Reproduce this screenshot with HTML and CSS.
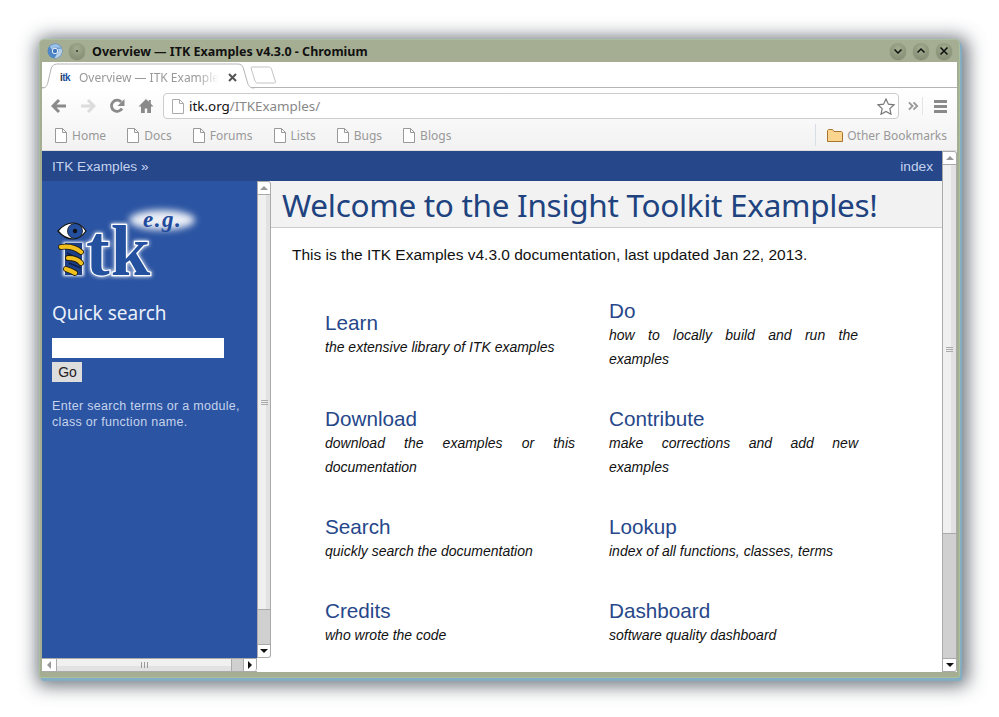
FILE: index.html
```html
<!DOCTYPE html>
<html lang="en">
<head>
    <meta charset="UTF-8">
    <title>Overview — ITK Examples v4.3.0</title>
    <link rel="stylesheet" href="styles.css">
</head>
<body>
<div class="window">
    <!-- Title bar -->
    <div class="titlebar">
        <svg class="app-icon" width="16" height="16" viewBox="0 0 16 16">
            <circle cx="8" cy="8" r="7.5" fill="#4f86c6"/>
            <path d="M8 1a7 7 0 0 1 6.2 3.8H8a3.2 3.2 0 0 0-3 2L2.6 3.6A7 7 0 0 1 8 1z" fill="#9cc0e6"/>
            <path d="M14.6 5.6A7 7 0 0 1 7.5 15l3-5a3.2 3.2 0 0 0 .3-4.2z" fill="#b5cfe9"/>
            <circle cx="8" cy="8" r="3" fill="#fff"/>
            <circle cx="8" cy="8" r="2.2" fill="#3f78bd"/>
        </svg>
        <span class="wm-btn wm-menu"><i></i></span>
        <span class="title-text">Overview — ITK Examples v4.3.0 - Chromium</span>
        <span class="wm-btn">
            <svg width="16" height="16" viewBox="0 0 16 16"><path d="M4.5 6.5 8 10l3.500-3.500" fill="none" stroke="#111" stroke-width="1.500"/></svg>
        </span>
        <span class="wm-btn">
            <svg width="16" height="16" viewBox="0 0 16 16"><path d="M4.500 9.500 8 6l3.500 3.500" fill="none" stroke="#111" stroke-width="1.500"/></svg>
        </span>
        <span class="wm-btn">
            <svg width="16" height="16" viewBox="0 0 16 16"><path d="M4.500 4.500l7 7m0-7l-7 7" fill="none" stroke="#111" stroke-width="1.600"/></svg>
        </span>
    </div>

    <!-- Tabs -->
    <div class="tabstrip">
        <div class="tab">
            <svg class="tab-shape" width="214" height="27" viewBox="0 0 214 27">
                <path d="M0 26c4 0 5-2 6-6L9 7c.8-3 3-5 6-5h181c3 0 4.500 1.500 5.300 4l4 14c1 4 2.500 6 7 6" fill="#fff" stroke="#b5b5b5"/>
            </svg>
            <span class="favicon">i<b>tk</b></span>
            <span class="tab-title">Overview — ITK Examples</span>
            <svg class="tab-close" width="9" height="9" viewBox="0 0 9 9"><path d="M1 1l7 7m0-7L1 8" stroke="#555" stroke-width="2"/></svg>
        </div>
        <svg class="newtab" width="27" height="18" viewBox="0 0 27 18">
            <path d="M1.500 1h17c1.500 0 2.500.5 3 2l4 13c.2.800 0 1-1 1H8c-1.500 0-2.500-.5-3-2L1 2c-.2-.6 0-1 .5-1z" fill="#fff" stroke="#c4c4c4"/>
        </svg>
    </div>

    <!-- Toolbar -->
    <div class="chrome-top">
        <div class="toolbar">
            <svg class="tool" width="16" height="16" viewBox="0 0 16 16"><path d="M8 2 2 8l6 6M2.500 8H15" fill="none" stroke="#8a8a8a" stroke-width="3"/></svg>
            <svg class="tool" width="16" height="16" viewBox="0 0 16 16"><path d="M8 2l6 6-6 6M13.500 8H1" fill="none" stroke="#dcdcdc" stroke-width="3"/></svg>
            <svg class="tool" width="16" height="16" viewBox="0 0 16 16"><path d="M13 10.500A5.600 5.600 0 1 1 12.200 4" fill="none" stroke="#8a8a8a" stroke-width="2.800"/><path d="M15.500 1v7h-7z" fill="#8a8a8a"/></svg>
            <svg class="tool" width="16" height="16" viewBox="0 0 16 16"><path d="M8 1 .5 8.500H3V15h3.800v-4.500h2.400V15H13V8.500h2.500L12.800 5.800V2h-2v1.800z" fill="#8a8a8a"/></svg>
            <div class="omnibox">
                <svg class="page-icon" width="12" height="15" viewBox="0 0 12 15"><path d="M.5.500h7l4 4v10H.500z" fill="#fff" stroke="#aaa"/><path d="M7.500.500v4h4" fill="none" stroke="#aaa"/></svg>
                <span class="url"><span class="url-host">itk.org</span>/ITKExamples/</span>
                <svg class="star" width="18" height="17" viewBox="0 0 20 19"><path d="m10 1 2.700 5.900 6.300.7-4.700 4.300 1.300 6.300L10 15l-5.600 3.200 1.300-6.300L1 7.600l6.300-.7z" fill="#fff" stroke="#777" stroke-width="1.300"/></svg>
            </div>
            <svg class="chevrons" width="11" height="10" viewBox="0 0 12 10"><path d="m1 1 4 4-4 4m5-8 4 4-4 4" fill="none" stroke="#999" stroke-width="2"/></svg>
            <span class="tool-sep"></span>
            <span class="menu-icon"><i></i><i></i><i></i></span>
        </div>

        <!-- Bookmarks -->
        <div class="bookmarks">
            <span class="bm"><svg class="bm-icon" width="12" height="15" viewBox="0 0 12 15"><path d="M.5.500h7l4 4v10H.500z" fill="#fff" stroke="#999"/><path d="M7.500.500v4h4" fill="none" stroke="#999"/></svg>Home</span>
            <span class="bm"><svg class="bm-icon" width="12" height="15" viewBox="0 0 12 15"><path d="M.5.500h7l4 4v10H.500z" fill="#fff" stroke="#999"/><path d="M7.500.500v4h4" fill="none" stroke="#999"/></svg>Docs</span>
            <span class="bm"><svg class="bm-icon" width="12" height="15" viewBox="0 0 12 15"><path d="M.5.500h7l4 4v10H.500z" fill="#fff" stroke="#999"/><path d="M7.500.500v4h4" fill="none" stroke="#999"/></svg>Forums</span>
            <span class="bm"><svg class="bm-icon" width="12" height="15" viewBox="0 0 12 15"><path d="M.5.500h7l4 4v10H.500z" fill="#fff" stroke="#999"/><path d="M7.500.500v4h4" fill="none" stroke="#999"/></svg>Lists</span>
            <span class="bm"><svg class="bm-icon" width="12" height="15" viewBox="0 0 12 15"><path d="M.5.500h7l4 4v10H.500z" fill="#fff" stroke="#999"/><path d="M7.500.500v4h4" fill="none" stroke="#999"/></svg>Bugs</span>
            <span class="bm"><svg class="bm-icon" width="12" height="15" viewBox="0 0 12 15"><path d="M.5.500h7l4 4v10H.500z" fill="#fff" stroke="#999"/><path d="M7.500.500v4h4" fill="none" stroke="#999"/></svg>Blogs</span>
            <span class="bm-other">
                <svg class="folder" width="16" height="13" viewBox="0 0 16 13"><path d="M.5 12.500V1.500l1-1h4l1.500 2h7.500l1 1v9z" fill="#fbd48e" stroke="#a8742e"/></svg>
                Other Bookmarks
            </span>
        </div>
    </div>

    <!-- Page -->
    <div class="page">
        <div class="page-left">
            <div class="relbar">
                <span>ITK Examples »</span>
                <span class="relbar-index">index</span>
            </div>
            <div class="page-row">
                <div class="side-col">
                    <div class="side-top">
                        <div class="sidebar">
                            <svg class="logo" width="150" height="76" viewBox="0 0 150 76">
                                <defs>
                                    <filter id="glow" x="-30%" y="-20%" width="160%" height="140%"><feGaussianBlur stdDeviation="1.500"/></filter>
                                    <filter id="soft" x="-20%" y="-40%" width="140%" height="180%"><feGaussianBlur stdDeviation="3.500"/></filter>
                                </defs>
                                <ellipse cx="107" cy="12" rx="33" ry="10" fill="#fff" opacity=".9" filter="url(#soft)"/>
                                <text class="logo-eg" x="88" y="19">e.g.</text>
                                <text class="logo-tk" x="31" y="67">tk</text>
                                <rect x="8" y="34" width="21" height="34" fill="#fff" filter="url(#glow)"/>
                                <rect x="10" y="35" width="17" height="32" fill="#1c3f88"/>
                                <path d="M3 23C8 17 13 15 18 15s9 2 13 8c-4 6-8 8-13 8S8 29 3 23z" fill="#fff" stroke="#111" stroke-width="1.200"/>
                                <circle cx="20" cy="23" r="7.500" fill="#24509f" stroke="#111" stroke-width=".8"/>
                                <circle cx="20" cy="23" r="2.200" fill="#111"/>
                                <path d="M12 45 26 52M14 55 26 60" stroke="#0d1f45" stroke-width="1.500"/>
                                <path d="M6 39c7-1 14 0 20 5M13 50c5 0 10 1 13 5M11 61c3 1 6 2 9 4" fill="none" stroke="#221c04" stroke-width="5.800" stroke-linecap="round"/>
                                <path d="M6 39c7-1 14 0 20 5M13 50c5 0 10 1 13 5M11 61c3 1 6 2 9 4" fill="none" stroke="#f2c01e" stroke-width="4.200" stroke-linecap="round"/>
                            </svg>
                            <h3 class="side-title">Quick search</h3>
                            <div class="search-input"></div>
                            <div class="search-go">Go</div>
                            <p class="side-note">Enter search terms or a module, class or function name.</p>
                        </div>
                        <div class="vbar side-vbar">
                            <div class="sb-btn sb-btn-first"><span class="arrow-up"></span></div>
                            <div class="sb-thumb side-thumb"><span class="grip-v"><i></i><i></i><i></i></span></div>
                            <div class="sb-trough"></div>
                            <div class="sb-btn sb-btn-last"><span class="arrow-down"></span></div>
                        </div>
                    </div>
                    <div class="hbar">
                        <div class="sb-hbtn sb-hbtn-first"><span class="arrow-left"></span></div>
                        <div class="sb-hthumb"><span class="grip-h"><i></i><i></i><i></i></span></div>
                        <div class="sb-htrough"></div>
                        <div class="sb-hbtn sb-hbtn-last"><span class="arrow-right"></span></div>
                    </div>
                </div>

                <div class="content">
                    <h1 class="page-heading">Welcome to the Insight Toolkit Examples!</h1>
                    <p class="intro">This is the ITK Examples v4.3.0 documentation, last updated Jan 22, 2013.</p>
                    <div class="links">
                        <div class="link-cell"><a class="link-title">Learn</a><p class="link-desc">the extensive library of ITK examples</p></div>
                        <div class="link-cell"><a class="link-title">Do</a><p class="link-desc">how to locally build and run the examples</p></div>
                        <div class="link-cell"><a class="link-title">Download</a><p class="link-desc">download the examples or this documentation</p></div>
                        <div class="link-cell"><a class="link-title">Contribute</a><p class="link-desc">make corrections and add new examples</p></div>
                        <div class="link-cell"><a class="link-title">Search</a><p class="link-desc">quickly search the documentation</p></div>
                        <div class="link-cell"><a class="link-title">Lookup</a><p class="link-desc">index of all functions, classes, terms</p></div>
                        <div class="link-cell"><a class="link-title">Credits</a><p class="link-desc">who wrote the code</p></div>
                        <div class="link-cell"><a class="link-title">Dashboard</a><p class="link-desc">software quality dashboard</p></div>
                    </div>
                </div>
            </div>
        </div>
        <div class="vbar main-vbar">
            <div class="sb-btn sb-btn-first"><span class="arrow-up"></span></div>
            <div class="sb-thumb main-thumb"><span class="grip-v"><i></i><i></i><i></i></span></div>
            <div class="sb-trough"></div>
            <div class="sb-btn sb-btn-last"><span class="arrow-down"></span></div>
        </div>
    </div>
</div>
</body>
</html>
```

FILE: styles.css
```css
* {
    box-sizing: border-box;
}
html, body {
    margin: 0;
    height: 717px;
    background: #fff;
    overflow: hidden;
}
body {
    padding: 40px 0 0 40px;
    font-family: 'Liberation Sans', sans-serif;
}

/* Window frame */
.window {
    width: 919px;
    height: 637px;
    display: flex;
    flex-direction: column;
    background: #a5ae93;
    border-radius: 4px 4px 2px 2px;
    padding: 0 2px 5px 2px;
    box-shadow: 0 0 0 1px #a9bf9d, 2px 3px 1px 1px #82aec6, 3px 3px 18px 6px rgba(50, 60, 70, 0.7);
}
.titlebar {
    height: 22px;
    display: flex;
    align-items: center;
    padding: 0 5px 0 5px;
    flex: none;
}
.app-icon {
    flex: none;
}
.title-text {
    font-family: 'Noto Sans', sans-serif;
    font-weight: bold;
    font-size: 12.5px;
    color: #111;
    margin-left: 7px;
    flex: 1;
}
.wm-btn {
    width: 16px;
    height: 16px;
    border-radius: 50%;
    background: radial-gradient(circle at 50% 35%, #a3ac8f, #7f8870);
    box-shadow: 0 1px 1px rgba(60, 60, 40, 0.4);
    margin-left: 7px;
    display: flex;
    align-items: center;
    justify-content: center;
}
.wm-menu {
    margin-left: 6px;
}
.wm-menu i {
    width: 2px;
    height: 2px;
    background: #333;
    border-radius: 50%;
}

/* Tabs */
.tabstrip {
    height: 26px;
    background: #fff;
    border-bottom: 1px solid #b5b5b5;
    display: flex;
    align-items: flex-end;
    padding-left: 1px;
    flex: none;
}
.tab {
    position: relative;
    width: 208px;
    height: 26px;
    display: flex;
    align-items: center;
    padding: 5px 0 0 17px;
    margin-bottom: -1px;
}
.tab-shape {
    position: absolute;
    left: -1px;
    top: 0;
}
.favicon {
    position: relative;
    font-size: 10px;
    font-weight: bold;
    color: #333;
    width: 19px;
    letter-spacing: -0.5px;
}
.favicon b {
    color: #2450a0;
}
.tab-title {
    position: relative;
    font-family: 'Noto Sans', sans-serif;
    font-size: 12px;
    color: #999;
    width: 140px;
    white-space: nowrap;
    -webkit-mask-image: linear-gradient(to right, #000 85%, transparent);
    mask-image: linear-gradient(to right, #000 85%, transparent);
}
.tab-close {
    position: relative;
    margin-left: 9px;
}
.newtab {
    margin: 0 0 3px -1px;
}

/* Toolbar */
.chrome-top {
    flex: none;
    background: linear-gradient(#fff, #f2f2f2);
    border-bottom: 1px solid #ddd;
    height: 63px;
}
.toolbar {
    height: 36px;
    display: flex;
    align-items: center;
    padding-left: 9px;
}
.tool {
    margin-right: 13px;
    flex: none;
}
.omnibox {
    width: 736px;
    height: 26px;
    margin-left: -4px;
    background: #fff;
    border: 1px solid #ccc;
    border-radius: 4px;
    display: flex;
    align-items: center;
    padding: 0 3px 0 8px;
}
.page-icon {
    flex: none;
}
.url {
    margin-left: 5px;
    flex: 1;
    font-family: 'Noto Sans', sans-serif;
    font-size: 13.4px;
    color: #888;
}
.url-host {
    color: #111;
}
.chevrons {
    margin-left: 9px;
}
.tool-sep {
    width: 1px;
    height: 18px;
    background: #e4e4e4;
    margin-left: 3px;
}
.menu-icon {
    display: flex;
    flex-direction: column;
    gap: 2px;
    margin-left: 11px;
}
.menu-icon i {
    width: 13px;
    height: 3px;
    background: #8a8a8a;
    display: block;
}

/* Bookmarks bar */
.bookmarks {
    height: 22px;
    display: flex;
    align-items: center;
    font-family: 'Noto Sans', sans-serif;
    font-size: 12px;
    color: #999;
    padding-left: 13px;
}
.bm {
    display: flex;
    align-items: center;
    margin-right: 21px;
}
.bm-icon {
    margin-right: 5px;
}
.bm-other {
    margin-left: auto;
    padding-left: 11px;
    margin-right: 10px;
    border-left: 1px solid #d8dde8;
    height: 22px;
    display: flex;
    align-items: center;
    gap: 4px;
}

/* Page area */
.page {
    flex: 1;
    min-height: 0;
    display: flex;
    background: #fff;
}
.page-left {
    flex: 1;
    min-width: 0;
    display: flex;
    flex-direction: column;
}
.relbar {
    height: 30px;
    flex: none;
    background: #26478a;
    color: #c4d2ee;
    font-size: 13.7px;
    display: flex;
    align-items: center;
    justify-content: space-between;
    padding: 0 9px 0 10px;
}
.page-row {
    flex: 1;
    min-height: 0;
    display: flex;
}

/* Sidebar */
.side-col {
    width: 229px;
    flex: none;
    display: flex;
    flex-direction: column;
}
.side-top {
    height: 477px;
    display: flex;
    flex: none;
}
.sidebar {
    width: 215px;
    background: #2b54a2;
    padding: 0 10px;
    color: #fff;
}
.logo {
    display: block;
    margin: 27px 0 0 3px;
    overflow: visible;
}
.logo-eg {
    font-family: 'Liberation Serif', serif;
    font-weight: bold;
    font-style: italic;
    font-size: 23px;
    letter-spacing: 1.500px;
    fill: #1f4a9c;
}
.logo-tk {
    font-family: 'Liberation Serif', serif;
    font-weight: bold;
    font-size: 71px;
    letter-spacing: 1px;
    fill: #2450a0;
    stroke: #fff;
    stroke-width: 2.5;
    paint-order: stroke;
    filter: drop-shadow(0 0 2px #fff);
}
.side-title {
    font-family: 'Noto Sans', sans-serif;
    font-weight: normal;
    font-size: 19px;
    line-height: 26px;
    color: #eaf0fa;
    margin: 16px 0 0;
}
.search-input {
    width: 172px;
    height: 20px;
    background: #fff;
    margin-top: 12px;
}
.search-go {
    width: 30px;
    height: 20px;
    background: #ddd;
    color: #222;
    font-size: 14px;
    line-height: 20px;
    text-align: center;
    padding-left: 1px;
    margin-top: 4px;
}
.side-note {
    font-size: 12.500px;
    line-height: 16px;
    letter-spacing: 0.3px;
    color: #c6d3ec;
    margin: 16px 0 0;
}

/* Scrollbars */
.vbar {
    width: 15px;
    flex: none;
    display: flex;
    flex-direction: column;
    border-left: 1px solid #aaa;
}
.side-vbar {
    width: 14px;
}
.sb-btn {
    height: 14px;
    flex: none;
    background: #fff;
    border: 1px solid #aaa;
    border-left: none;
    display: flex;
    align-items: center;
    justify-content: center;
}
.sb-btn-first {
    border-radius: 0 3px 0 0;
}
.sb-btn-last {
    border-radius: 0 0 3px 0;
    border-top: 1px solid #aaa;
    border-bottom: 1px solid #aaa;
}
.sb-thumb {
    flex: none;
    background: linear-gradient(to right, #f0f0f0 65%, #e2e2e2 65%);
    border-bottom: 1px solid #aaa;
    display: flex;
    align-items: center;
    justify-content: center;
}
.side-thumb {
    height: 415px;
}
.main-thumb {
    height: 369px;
}
.sb-trough {
    flex: 1;
    background: #d0d0d0;
}
.side-vbar .sb-btn, .side-vbar .sb-thumb, .side-vbar .sb-trough,
.main-vbar .sb-btn, .main-vbar .sb-thumb, .main-vbar .sb-trough {
    border-right: 1px solid #aaa;
}
.grip-v {
    display: flex;
    flex-direction: column;
    gap: 1px;
}
.grip-v i {
    width: 7px;
    height: 1px;
    background: #aaa;
    display: block;
}
.grip-h {
    display: flex;
    gap: 2px;
}
.grip-h i {
    width: 1px;
    height: 6px;
    background: #999;
    display: block;
}
.arrow-up, .arrow-down, .arrow-left, .arrow-right {
    width: 0;
    height: 0;
    display: block;
    border-style: solid;
    border-color: transparent;
}
.arrow-up {
    border-width: 0 4px 4px;
    border-bottom-color: #999;
}
.arrow-down {
    border-width: 4px 4px 0;
    border-top-color: #111;
}
.arrow-left {
    border-width: 4px 4px 4px 0;
    border-right-color: #999;
}
.arrow-right {
    border-width: 4px 0 4px 4px;
    border-left-color: #111;
}
.hbar {
    width: 215px;
    height: 14px;
    display: flex;
    flex: none;
    border-top: 1px solid #aaa;
    border-bottom: 1px solid #aaa;
}
.sb-hbtn {
    width: 15px;
    flex: none;
    background: #fff;
    display: flex;
    align-items: center;
    justify-content: center;
}
.sb-hbtn-first {
    border-right: 1px solid #aaa;
    border-radius: 0 0 0 3px;
}
.sb-hbtn-last {
    width: 14px;
    border-left: 1px solid #aaa;
    border-right: 1px solid #aaa;
    border-radius: 0 0 3px 0;
}
.sb-hthumb {
    width: 175px;
    flex: none;
    background: linear-gradient(#f0f0f0 55%, #e2e2e2 55%);
    border-right: 1px solid #aaa;
    display: flex;
    align-items: center;
    justify-content: center;
}
.sb-htrough {
    flex: 1;
    background: #d0d0d0;
}

/* Content */
.content {
    flex: 1;
    min-width: 0;
    overflow: hidden;
}
.page-heading {
    font-family: 'Noto Sans', sans-serif;
    font-weight: normal;
    font-size: 31.500px;
    letter-spacing: -0.3px;
    line-height: 47px;
    height: 47px;
    margin: 0;
    padding-left: 11px;
    background: #f2f2f2;
    color: #20437f;
    border-bottom: 1px solid #ccc;
    white-space: nowrap;
}
.intro {
    font-size: 15.500px;
    line-height: 24px;
    color: #111;
    margin: 15px 0 0 21px;
}
.links {
    display: grid;
    grid-template-columns: 250px 249px;
    column-gap: 34px;
    row-gap: 36px;
    align-items: center;
    margin: 32px 0 0 54px;
}
.link-title {
    display: block;
    font-size: 20.700px;
    line-height: 24px;
    color: #26478a;
}
.link-desc {
    font-size: 14px;
    font-style: italic;
    line-height: 24px;
    color: #111;
    text-align: justify;
    margin: 0;
}
```
